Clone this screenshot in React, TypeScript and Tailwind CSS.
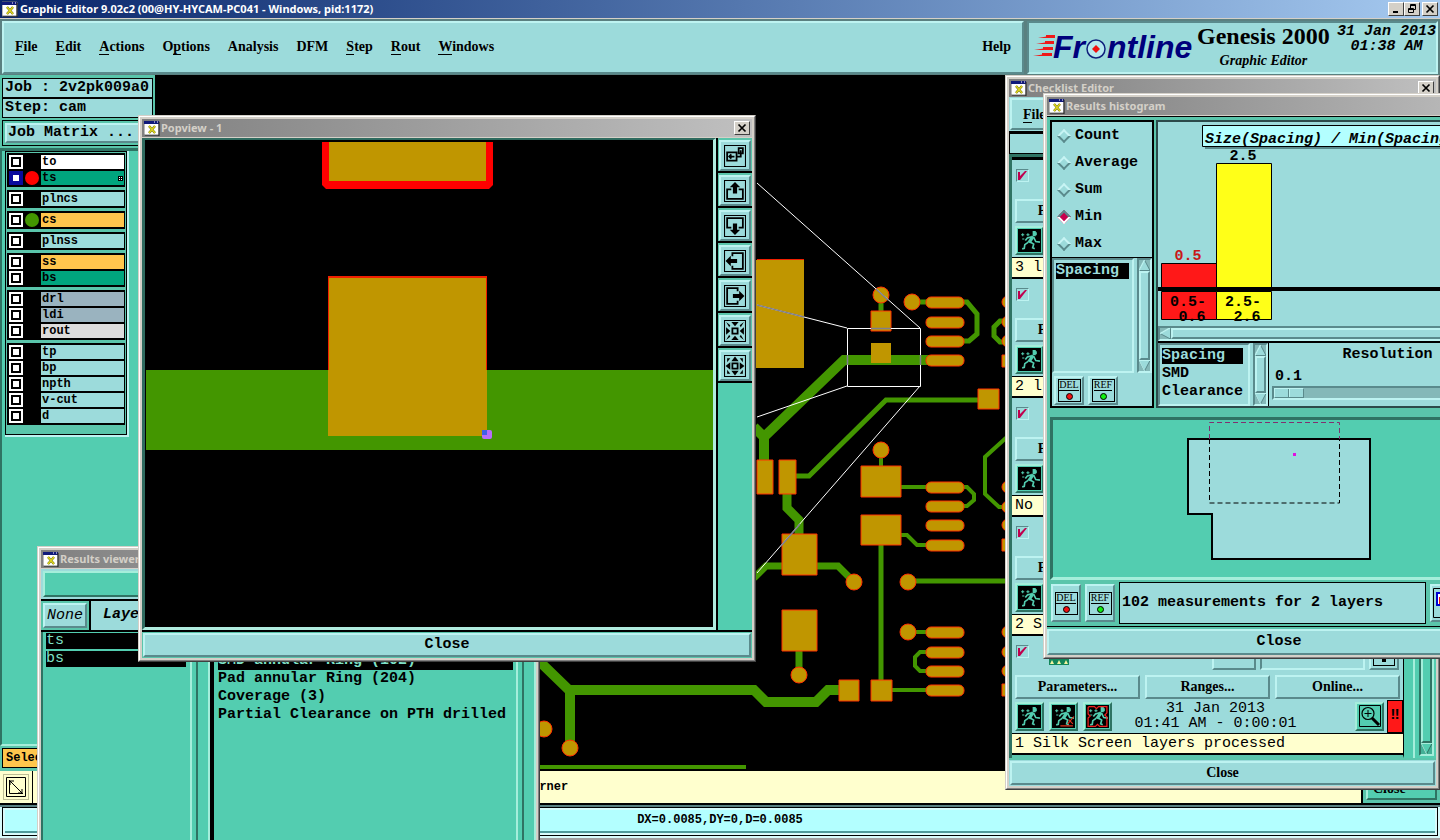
import { useState } from "react";
import type { ReactNode } from "react";
import clsx from "clsx";
import type { ClassValue } from "clsx";
import { twMerge } from "tailwind-merge";

const cn = (...classes: ClassValue[]) => twMerge(clsx(classes));

const RAISED = "border-2 border-t-[#bdf3f1] border-l-[#bdf3f1] border-r-[#5a8a8c] border-b-[#5a8a8c] bg-[#9cdbdb]";
const RAISED_TEAL = "border-2 border-t-[#a5eedb] border-l-[#a5eedb] border-r-[#2f7363] border-b-[#2f7363] bg-[#53cdb0]";
const SUNK = "border-2 border-t-[#5a8a8c] border-l-[#5a8a8c] border-r-[#bdf3f1] border-b-[#bdf3f1]";
const MONO = "font-['Liberation_Mono',monospace] text-[15px] leading-[18px]";
const SERIF = "font-['Liberation_Serif',serif] text-[14px] leading-[18px] font-bold";
const TITLE = "font-['Noto_Sans',sans-serif] text-[11px] leading-[16px] font-bold";

const LAYER_GROUPS = [
  [
    { name: "to", tone: "bg-white" },
    { name: "ts", tone: "bg-[#00a57e]", dot: "bg-[#ff0000]", active: true },
  ],
  [{ name: "plncs", tone: "bg-[#9cdbdb]" }],
  [{ name: "cs", tone: "bg-[#ffc64d]", dot: "bg-[#439600]" }],
  [{ name: "plnss", tone: "bg-[#9cdbdb]" }],
  [
    { name: "ss", tone: "bg-[#ffc64d]" },
    { name: "bs", tone: "bg-[#00a57e]" },
  ],
  [
    { name: "drl", tone: "bg-[#9ab3bf]" },
    { name: "ldi", tone: "bg-[#9ab3bf]" },
    { name: "rout", tone: "bg-[#dcdcdc]" },
  ],
  [
    { name: "tp", tone: "bg-[#9cdbdb]" },
    { name: "bp", tone: "bg-[#9cdbdb]" },
    { name: "npth", tone: "bg-[#9cdbdb]" },
    { name: "v-cut", tone: "bg-[#9cdbdb]" },
    { name: "d", tone: "bg-[#9cdbdb]" },
  ],
];

const MENUS = [
  ["", "F", "ile"],
  ["", "E", "dit"],
  ["", "A", "ctions"],
  ["O", "p", "tions"],
  ["Analysis", "", ""],
  ["DFM", "", ""],
  ["", "S", "tep"],
  ["", "R", "out"],
  ["", "W", "indows"],
];

function XIcon() {
  return (
    <svg width="16" height="16" viewBox="0 0 16 16" className="shrink-0" aria-hidden="true">
      <path d="M0 1h15v14H0z" fill="#fff" stroke="#777" />
      <path d="M0 1h15v3H0z" fill="#101a7a" />
      <path d="M10 1h1v2h-1zM13 1h1v2h-1z" fill="#8a8ac0" />
      <path d="M15 2v14H1" fill="none" stroke="#222" />
      <path d="M5 6l6 7M11 6l-6 7" stroke="#77760a" strokeWidth="2.400" />
      <path d="M5 6l6 7M11 6l-6 7" stroke="#e0d820" strokeWidth="1.200" />
    </svg>
  );
}

function CaptionButton({ label, children }: { label: string; children: ReactNode }) {
  return (
    <button
      aria-label={label}
      className="flex h-[14px] w-4 shrink-0 items-center justify-center border border-t-white border-l-white border-r-[#404040] border-b-[#404040] bg-[#d4d0c8]"
    >
      <svg width="10" height="10" viewBox="0 0 10 10" fill="none" stroke="#000">
        {children}
      </svg>
    </button>
  );
}

const CROSS = <path d="M1.500 1.500l7 7M8.500 1.500l-7 7" strokeWidth="1.700" />;

type FrameProps = { title: string; place: string; closable?: boolean; children: ReactNode };

function Frame({ title, place, closable, children }: FrameProps) {
  return (
    <section
      aria-label={title}
      className={cn(
        "absolute flex flex-col border border-t-[#d4d0c8] border-l-[#d4d0c8] border-r-[#404040] border-b-[#404040] bg-[#d4d0c8]",
        place,
      )}
    >
      <div className="flex flex-1 flex-col border border-t-white border-l-white border-r-[#808080] border-b-[#808080] p-[2px]">
        <header className="flex h-[18px] shrink-0 items-center gap-px bg-linear-to-r from-[#808080] to-[#c0c0c0] px-[2px]">
          <XIcon />
          <h2 className={cn(TITLE, "flex-1 text-[#d4d0c8]")}>{title}</h2>
          {closable && <CaptionButton label={`Close ${title}`}>{CROSS}</CaptionButton>}
        </header>
        {children}
      </div>
    </section>
  );
}

function Logo() {
  return (
    <svg width="164" height="36" viewBox="0 0 164 36" role="img" aria-label="Frontline">
      <g fill="#f01818">
        <path d="M5 5l17-3v3zM3 11l18-3v3zM1 17l19-3v3zM0 23l19-3v3z" />
        <path d="M13 2h9v3h-9zM12 8h9v3h-9zM10 14h10v3H10zM9 20h10v3H9z" />
      </g>
      <g fill="#00007c" fontFamily="Liberation Sans, sans-serif" fontWeight="700" fontStyle="italic" fontSize="32">
        <text x="20" y="25">Fr</text>
        <text x="74" y="25">ntline</text>
      </g>
      <circle cx="63" cy="16" r="9" fill="#b5e8ee" stroke="#10207c" strokeWidth="1.500" />
      <path d="M63 12l4 4-4 4-4-4z" fill="#f01010" />
    </svg>
  );
}

function Runner({ variant = "plain" }: { variant?: "plain" | "line" | "frame" }) {
  return (
    <button aria-label={`Run ${variant}`} className={cn("flex size-[29px] shrink-0 items-center justify-center", RAISED_TEAL)}>
      <svg width="23" height="23" viewBox="0 0 22 22" fill="none" stroke="#53cdb0" aria-hidden="true">
        <path d="M0 0h22v22H0z" fill="#000" stroke="none" />
        <path d="M14 2h3v1h1v3h-1v1h-3z" fill="#53cdb0" stroke="none" />
        <path d="M14.500 7l-4 6" strokeWidth="3.200" />
        <path d="M13 7.500L9 8.500 7 11M15 8l2 4 4 .500M11 12l4 2.500-1 3.500 2 1M10 12.500L6.500 15 6 18.500l-2 .500" strokeWidth="1.600" />
        <path d="M3 5.500h3M4.500 4v3M8 5.500h3M9.500 4v3M4 9.500h2" />
        {variant === "line" && <path d="M8 20h12M15 18l6-7M16 14l4 4" stroke="#e0301c" strokeWidth="1.100" />}
        {variant === "frame" && <path d="M3 1.500h5l2 2 2-2h8v6l-2 2 2 2v9h-7l-2-2-2 2H2v-8l2-2-2-2v-6z" stroke="#f02020" strokeWidth="1.200" />}
      </svg>
    </button>
  );
}

function Scrollbar({ horizontal, teal, onlyDown }: { horizontal?: boolean; teal?: boolean; onlyDown?: boolean }) {
  return (
    <div
      className={cn(
        "flex shrink-0",
        horizontal ? "h-[15px] w-full" : "w-[15px] flex-col",
        teal ? "bg-[#43b096]" : "bg-[#84b8b8]",
        SUNK,
        teal && "border-t-[#2f7363] border-l-[#2f7363] border-r-[#a5eedb] border-b-[#a5eedb]",
      )}
    >
      {!onlyDown && (
        <svg width="11" height="11" viewBox="0 0 11 11" className="shrink-0" aria-hidden="true">
          <path d={horizontal ? "M10.500 0v11L0 5.500z" : "M5.500 0L11 10.500H0z"} fill="#9cdbdb" stroke="#5a8a8c" />
          <path d={horizontal ? "M10 0L0 5.500" : "M5.500 0L0 10.500"} stroke="#bdf3f1" strokeWidth="1.500" />
        </svg>
      )}
      <div className={cn("flex-1", teal ? RAISED_TEAL : RAISED)} />
      {!horizontal && (
        <svg width="11" height="11" viewBox="0 0 11 11" className="shrink-0" aria-hidden="true">
          <path d="M0 .500h11L5.500 11z" fill={teal ? "#53cdb0" : "#9cdbdb"} stroke={teal ? "#2f7363" : "#5a8a8c"} />
          <path d="M0 .500h11M0 0l5.500 11" stroke={teal ? "#a5eedb" : "#bdf3f1"} fill="none" />
        </svg>
      )}
    </div>
  );
}

function BoardCanvas() {
  return (
    <svg className="h-full min-w-0 flex-1 bg-black" role="img" aria-label="Board canvas">
      <g transform="translate(-155 -75)">
        <g fill="none" stroke="#439600">
          <path strokeWidth="10" d="M930 360H844L764 437V462M754 427l10 10" />
          <path strokeWidth="5" d="M881 300v14M912 302h18M978 400H886L809 476H795M964 302h3l10 12v20l-8 7h-6M1006 321h-6l-6 6v9l6 6h6" />
          <path strokeWidth="9" d="M787 494v14l12 12v16" />
          <path strokeWidth="7" d="M784 566H766l-12 12M816 566h22l14 14M799 650v20" />
          <path strokeWidth="4" d="M881 455v14M900 487h28M900 535h7l10 10h10M964 487h3l7 7v6l-7 6h-4M1007 437l-22 20v37l14 13h6M926 652h-6l-5 5v9l5 5h6M890 690h38M908 632h20M540 767h206" />
          <path strokeWidth="5" d="M881 545v137M908 581h100" />
          <path strokeWidth="10" d="M538 660l31 30h185l12 12h50l12-12h12M570 690v52" />
        </g>
        <path d="M757 259h47v1h-47z" fill="#f02000" />
        <path d="M750 260h54v108h-54zM871 343h20v20h-20z" fill="#c09600" />
        <g fill="#c09600" stroke="#ff3000">
          <path d="M871 311h20v20h-20zM978 389h21v20h-21zM757 460h16v34h-16zM779 460h17v34h-17zM782 534h35v41h-35zM782 610h35v41h-35z" />
          <path d="M861 466h40v31h-40zM861 515h40v30h-40zM839 680h20v21h-20zM871 680h21v21h-21z" />
          <path d="M1002 355h10v12h-10zM1002 539h10v12h-10zM1002 684h10v12h-10z" />
          {[302, 322, 341, 360, 487, 506, 525, 545, 632, 652, 671, 690].map((y) => (
            <rect key={y} x="926" y={y - 5} width="38" height="11" rx="5" />
          ))}
          {[302, 322, 341, 487, 507, 525, 632, 652, 671].map((y) => (
            <circle key={y} cx="1008" cy={y} r="6" />
          ))}
          {[[881, 295], [912, 302], [881, 450], [854, 582], [908, 582], [908, 632], [799, 675], [544, 729], [570, 748]].map(([x, y]) => (
            <circle key={`${x}-${y}`} cx={x} cy={y} r="8" />
          ))}
        </g>
        <path d="M847.500 328.500h73v58h-73zM757 183l163 145M757 305l90 23M757 417l90-31M757 573l163-187" fill="none" stroke="#fff" />
        <path d="M757 305l47 12M876 289l12 11M871 328.500h20M781 546l19-22M847.500 355v10M920.500 355v10" stroke="#7f7f8f" strokeWidth="1.500" fill="none" />
      </g>
    </svg>
  );
}

function Sidebar() {
  return (
    <aside className="flex w-[155px] shrink-0 flex-col bg-[#53cdb0]">
      <div className={cn(MONO, "flex flex-col bg-[#5ac5ab] px-[2px] pt-[3px] pb-[2px] font-bold whitespace-nowrap")}>
        <p className="border border-black bg-[#9cdbdb] px-[2px]">Job : 2v2pk009a0</p>
        <p className="border border-black bg-[#9cdbdb] px-[2px]">Step: cam</p>
        <div className="mt-[2px] border border-black bg-[#5ac5ab] p-[2px]">
          <button className={cn("block w-full px-px text-left leading-[16px]", RAISED)}>Job Matrix ...</button>
        </div>
      </div>
      <div className="flex-1 border-t-[3px] border-l-2 border-[#2f7363] border-b-2 border-b-[#a5eedb] pl-[3px]">
        <div className="w-[124px] border-r-2 border-b-2 border-[#bdf3f1]">
          <ul className="flex flex-col gap-[3px] border border-black bg-[#5ac5ab] px-px pt-px pb-[9px]">
            {LAYER_GROUPS.map((group) => (
              <li key={group[0].name} className="bg-black p-px">
                {group.map((layer) => (
                  <label key={layer.name} className="flex h-4 items-center gap-px font-['Liberation_Mono',monospace] text-[12px] leading-[14px] font-bold">
                    <span className={cn("ml-px flex size-[14px] items-center justify-center", layer.active ? "bg-[#0a0a9c]" : "bg-white")}>
                      <input
                        type="checkbox"
                        className={cn("size-[10px] appearance-none border-2 border-black bg-white", layer.active && "border-[#0a0a9c]")}
                      />
                    </span>
                    <span className={cn("ml-px size-[14px] rounded-full", layer.dot)} />
                    <span className={cn("ml-px flex h-[14px] flex-1 items-center justify-between px-px", layer.tone)}>
                      {layer.name}
                      {layer.active && (
                        <svg width="5" height="5" viewBox="0 0 5 5" shapeRendering="crispEdges" aria-hidden="true">
                          <path d="M0 0h5v5H0z" />
                          <path d="M1 1h1v1H1zM3 1h1v1H3zM1 3h1v1H1zM3 3h1v1H3z" fill="#fff" />
                        </svg>
                      )}
                    </span>
                  </label>
                ))}
              </li>
            ))}
          </ul>
        </div>
      </div>
      <div className="bg-[#5ac5ab] px-[2px] pt-[2px] pb-[3px]">
        <p className="border border-black bg-[#ffc64d] px-[3px] font-['Liberation_Mono',monospace] text-[12px] leading-[18px] font-bold">Select</p>
      </div>
    </aside>
  );
}

const VIEW_TOOLS = [
  { name: "Detach view", lines: "M3 7h9v8H3zM10 11H5M7 9l-2 2 2 2M14 3h4v5h-4zM16 5v6h-4" },
  { name: "Pan up", lines: "M7 9H3v9h15V9h-4", solid: "M10.500 2l5 5h-3v6h-4V7h-3z" },
  { name: "Pan down", lines: "M7 12H3V3h15v9h-4", solid: "M10.500 19l5-5h-3V8h-4v6h-3z" },
  { name: "Pan left", lines: "M8 6V3h10v15H8v-3", solid: "M1.500 10.500l5-5v3h6v4h-6v3z" },
  { name: "Pan right", lines: "M13 6V3H3v15h10v-3", solid: "M19.500 10.500l-5-5v3h-6v4h6v3z" },
  {
    name: "Zoom in",
    lines: "M8 8h5v5H8z",
    solid: "M7 2h7l-3.500 4zM7 19h7l-3.500-4zM2 7v7l4-3.500zM19 7v7l-4-3.500zM2 2l4 3-1 2zM19 2l-4 3 1 2zM2 19l4-3-1-2zM19 19l-4-3 1-2z",
  },
  {
    name: "Zoom out",
    lines: "M8 8h5v5H8z",
    solid: "M7 6h7l-3.500-4.500zM7 15h7l-3.500 4.500zM6 7v7l-4.500-3.500zM15 7v7l4.500-3.500zM3 7V3h3zM18 7V3h-3zM3 14v4h3zM18 14v4h-3z",
  },
];

function Popview() {
  return (
    <Frame title="Popview - 1" place="left-[138px] top-[115px] w-[618px]" closable>
      <div className="flex h-[493px] border-t border-[#d4d0c8] bg-[#5ac5ab]">
        <svg
          className="h-full min-w-0 flex-1 border-t-2 border-b-[3px] border-l-[3px] border-r-[3px] border-[#2f6b5f] border-r-[#b0ecdf] border-b-[#b0ecdf] bg-black"
          role="img"
          aria-label="Magnified pad"
        >
          <g transform="translate(-145 -140)">
            <path d="M146 370h567v80H146z" fill="#439600" />
            <path d="M322 142h171v43l-4 4H326l-4-4z" fill="#f00" />
            <path d="M329 142h157v39H329z" fill="#c09600" />
            <path d="M328 276h159v94H328z" fill="#f02000" />
            <path d="M329 278h157v92H329zM328 370h159v66H328z" fill="#c09600" />
            <rect x="482" y="430" width="10" height="9" rx="2" fill="#b86cf8" />
            <path d="M482 430h5v5h-5z" fill="#4060e8" />
          </g>
        </svg>
        <div className="w-[36px] border-l-2 border-black bg-[#53cdb0]">
          {VIEW_TOOLS.map((tool) => (
            <div key={tool.name} className="h-[35px] border-b-2 border-black bg-[#5ac5ab] px-px pt-[2px]">
              <button aria-label={tool.name} className={cn("flex h-[31px] w-full items-center justify-center", RAISED)}>
                <svg width="22" height="22" viewBox="0 0 21 21" stroke="#000" aria-hidden="true">
                  <path d="M.5.500h20v20H.500z" fill="none" />
                  <path d={tool.lines} fill="none" strokeWidth="1.700" />
                  {tool.solid && <path d={tool.solid} stroke="none" />}
                </svg>
              </button>
            </div>
          ))}
        </div>
      </div>
      <div className="border-t-2 border-black bg-[#5ac5ab] p-px">
        <button className={cn(MONO, "block w-full leading-[20px] font-bold", RAISED)}>Close</button>
      </div>
    </Frame>
  );
}

function ResultsViewer() {
  return (
    <Frame title="Results viewer" place="left-[37px] top-[546px] w-[503px] h-[400px]">
      <div className="mt-px bg-[#9cdbdb] p-[2px]">
        <button aria-label="Results menu" className={cn("block h-[26px] w-full", RAISED_TEAL)} />
      </div>
      <div className={cn(MONO, "flex border-y-2 border-black bg-[#9cdbdb] italic")}>
        <div className="border-r-2 border-black bg-[#5ac5ab] p-[2px]">
          <button className={cn("block h-[25px] w-[44px] px-px leading-[18px]", RAISED)}>None</button>
        </div>
        <p className="px-[12px] leading-7 font-bold">Layer</p>
      </div>
      <div className={cn(MONO, "flex flex-1 bg-[#53cdb0]")}>
        <ul className="w-[151px] border-l-2 border-r-[2px] border-l-[#2f7363] border-r-[#a5eedb] pt-px pr-[4px] pl-[3px] text-[#7fe0c8]">
          <li className="mb-[2px] bg-black leading-[16px]">ts</li>
          <li className="mb-[2px] bg-black leading-[16px]">bs</li>
        </ul>
        <div className="ml-[4px] w-[14px] border-x-2 border-l-[#2f7363] border-r-[#a5eedb]" />
        <ul className="flex-1 border-l-4 border-r-2 border-l-black border-r-[#a5eedb] pt-[20px] pr-[3px] pl-[4px] font-bold">
          <li className="bg-black text-[#7fe0c8]">SMD annular Ring (102)</li>
          <li>Pad annular Ring (204)</li>
          <li>Coverage (3)</li>
          <li>Partial Clearance on PTH drilled</li>
        </ul>
        <div className="ml-[4px] w-[14px] border-x-2 border-l-[#2f7363] border-r-[#a5eedb]" />
      </div>
    </Frame>
  );
}

const CHECKS = ["3 l", "2 l", "No", "2 S", "1 Silk Screen layers processed"];

function CheckItem({ message, last }: { message: string; last: boolean }) {
  return (
    <li className="flex flex-col bg-[#9cdbdb]">
      <div className="flex h-[39px] items-start justify-between gap-2 px-1 pt-[9px]">
        <label className="grid">
          <input type="checkbox" defaultChecked aria-label={`Enable ${message}`} className={cn("col-start-1 row-start-1 size-[13px] appearance-none", SUNK, "border")} />
          <svg width="13" height="13" viewBox="0 0 13 13" className="pointer-events-none col-start-1 row-start-1" aria-hidden="true">
            <path d="M2 3h2v4l5-5h2L4 11H2z" fill="#c0004e" />
          </svg>
        </label>
        {last && (
          <div className="flex h-[25px] flex-1 items-end gap-1">
            <svg width="20" height="20" viewBox="0 0 20 20" className="ml-3 self-start" aria-hidden="true">
              <path d="M0 0h20v20H0z" fill="#12865a" />
              <path d="M1 19l2-4 2 4zM8 19l2-4 2 4zM15 19l2-4 2 4z" fill="#f4f4a0" />
            </svg>
            <div className={cn("ml-auto h-6 w-[44px]", RAISED)} />
            <div className={cn("h-6 w-[105px]", SUNK)} />
            <button aria-label="Info" className={cn("flex h-[30px] w-[30px] items-center justify-center", RAISED)}>
              <span className="flex size-[22px] items-end justify-center border border-black pb-[3px]">
                <span className="size-1 bg-black" />
              </span>
            </button>
          </div>
        )}
      </div>
      <div className={cn(SERIF, "flex gap-[5px] px-[3px]")}>
        {["Parameters...", "Ranges...", "Online..."].map((label) => (
          <button key={label} className={cn("h-6 flex-1", RAISED)}>
            {label}
          </button>
        ))}
      </div>
      <div className="flex h-[34px] items-center pl-[3px]">
        <div className="flex gap-[5px]">
          <Runner />
          <Runner variant="line" />
          <Runner variant="frame" />
        </div>
        {last && (
          <p className={cn(MONO, "flex-1 pr-9 text-center leading-[15px]")}>
            31 Jan 2013
            <br />
            01:41 AM - 0:00:01
          </p>
        )}
        <button aria-label="Inspect" className={cn("ml-auto flex size-[29px] items-center justify-center", RAISED_TEAL)}>
          <svg width="22" height="22" viewBox="0 0 22 22" fill="none" stroke="#000" aria-hidden="true">
            <path d="M.5.500h21v21H.500zM9 5v7M5.500 8.500h7" />
            <circle cx="9" cy="8.500" r="6" strokeWidth="1.200" />
            <path d="M13 13l7 7" strokeWidth="3" />
          </svg>
        </button>
        <button aria-label="Errors" className="ml-[3px] flex h-[33px] w-4 items-center justify-center border border-black bg-[#ff1818]">
          <span className={cn(MONO, "font-bold")}>‼</span>
        </button>
      </div>
      <p className={cn(MONO, "border-t border-b-2 border-black bg-[#ffffce] px-[3px] pt-px")}>{message}</p>
    </li>
  );
}

function ChecklistEditor() {
  return (
    <Frame title="Checklist Editor" place="left-[1005px] top-[75px] w-[435px]" closable>
      <nav className={cn(SERIF, "flex h-[36px] items-center border-b-2 border-black bg-[#9cdbdb] p-px")}>
        <div className={cn("h-full w-full px-[11px] py-[6px] leading-[18px]", RAISED)}>
          <a href="#file" className="border-b border-black">F</a>ile
        </div>
      </nav>
      <div className="h-[21px] border border-black bg-[#9cdbdb]" />
      <div className="flex border-t-[3px] border-l-[3px] border-t-[#2f7363] border-l-[#2f7363] bg-[#53cdb0]">
        <ul className="flex-1 border-r border-b-[3px] border-black border-b-[#5ac5ab] bg-black pt-[3px]">
          {CHECKS.map((message, i) => (
            <CheckItem key={message} message={message} last={i === CHECKS.length - 1} />
          ))}
        </ul>
        <div className="ml-[9px] w-[2px] bg-[#a5eedb]" />
        <div className="ml-[4px] flex pr-[2px] pb-[2px]">
          <Scrollbar teal onlyDown />
        </div>
      </div>
      <div className="border-t-2 border-[#5ac5ab] bg-[#9cdbdb] p-px">
        <button className={cn(SERIF, "block h-6 w-full", RAISED)}>Close</button>
      </div>
    </Frame>
  );
}

function TagButton({ label, color, tall }: { label: string; color: string; tall?: boolean }) {
  return (
    <button className={cn("flex w-[30px] items-center justify-center", tall ? "h-[38px]" : "h-[29px]", RAISED)}>
      <span className="flex size-[23px] flex-col items-center border border-black">
        <span className="border-b border-black font-['Liberation_Serif',serif] text-[10px] leading-[10px] font-normal">{label}</span>
        <span className={cn("mt-[2px] size-[7px] rounded-full border border-black", color)} />
      </span>
    </button>
  );
}

function HistogramChart() {
  return (
    <svg className="block h-[204px] w-full" role="img" aria-label="Spacing histogram">
      <g transform="translate(-1158 -122)" fontFamily="Liberation Mono, monospace" fontSize="15" fontWeight="700" textAnchor="middle">
        <path d="M1205 129h300v20h-300z" fill="#5a8a8c" />
        <path d="M1202.500 125.500h300v21h-300z" fill="#b3ffff" stroke="#000" />
        <text x="1205" y="143" fontStyle="italic" textAnchor="start">Size(Spacing) / Min(Spacing)</text>
        <path d="M1161.500 263.500h55v24h-55zM1161.500 291.500h55v28h-55z" fill="#ff1818" stroke="#000" />
        <path d="M1216.500 163.500h55v124h-55zM1216.500 291.500h55v28h-55z" fill="#ffff18" stroke="#000" />
        <path d="M1156 287h400v4h-400z" />
        <text x="1188" y="260" fill="#c81818">0.5</text>
        <text x="1243" y="160">2.5</text>
        <text x="1188" y="306">0.5-</text>
        <text x="1192" y="321">0.6</text>
        <text x="1243" y="306">2.5-</text>
        <text x="1247" y="321">2.6</text>
      </g>
    </svg>
  );
}

function ResultsHistogram() {
  const [metric, setMetric] = useState("Min");

  return (
    <Frame title="Results histogram" place="left-[1043px] top-[93px] w-[472px]">
      <div className={cn(MONO, "mt-px border-t border-black bg-[#5ac5ab] px-[3px] font-bold")}>
        <div className="flex h-[291px] gap-[2px] pt-[3px]">
          <div className="flex w-[104px] shrink-0 flex-col border-2 border-black bg-[#9cdbdb]">
            <fieldset className="border-b border-black">
              {["Count", "Average", "Sum", "Min", "Max"].map((name) => (
                <label key={name} className="flex h-[27px] items-center gap-[5px] pl-[6px]">
                  <input
                    type="radio"
                    name="metric"
                    checked={metric === name}
                    onChange={() => setMetric(name)}
                    className={cn(
                      "mx-px size-[10px] rotate-45 appearance-none border-2",
                      metric === name
                        ? "border-t-[#5a8a8c] border-l-[#5a8a8c] border-r-white border-b-white bg-[#c8004e]"
                        : "border-t-[#c8f4f4] border-l-[#c8f4f4] border-r-[#5a8a8c] border-b-[#5a8a8c]",
                    )}
                  />
                  {name}
                </label>
              ))}
            </fieldset>
            <div className="flex flex-1 gap-[3px]">
              <ul className={cn("flex-1 p-[3px] pl-[2px]", SUNK)}>
                <li className="bg-black leading-[16px] text-[#9cdbdb]">Spacing</li>
              </ul>
              <Scrollbar />
            </div>
            <div className="flex gap-[4px] pt-[3px] pb-px pl-[2px]">
              <TagButton label="DEL" color="bg-[#f01010]" />
              <TagButton label="REF" color="bg-[#10f010]" />
            </div>
          </div>
          <div className="flex min-w-0 flex-1 flex-col border-2 border-[#2c4a4a] bg-[#9cdbdb]">
            <HistogramChart />
            <Scrollbar horizontal />
            <div className="flex flex-1 border-t-2 border-black">
              <ul className={cn("w-[92px] pt-[3px] pl-[2px]", SUNK)}>
                <li className="mb-px w-[81px] bg-black leading-[16px] text-[#9cdbdb]">Spacing</li>
                <li>SMD</li>
                <li>Clearance</li>
              </ul>
              <div className="ml-[3px] flex">
                <Scrollbar />
              </div>
              <div className="flex flex-1 flex-col border-l border-black px-[3px] pt-[3px]">
                <label htmlFor="resolution" className="text-center">Resolution</label>
                <output htmlFor="resolution" className="mt-[4px] px-[3px]">0.1</output>
                <input
                  id="resolution"
                  type="range"
                  defaultValue="0"
                  className={cn(
                    "h-[14px] w-full appearance-none bg-[#84b8b8] [&::-webkit-slider-thumb]:h-[10px] [&::-webkit-slider-thumb]:w-[30px] [&::-webkit-slider-thumb]:appearance-none [&::-webkit-slider-thumb]:border [&::-webkit-slider-thumb]:border-t-[#bdf3f1] [&::-webkit-slider-thumb]:border-l-[#bdf3f1] [&::-webkit-slider-thumb]:border-r-[#5a8a8c] [&::-webkit-slider-thumb]:border-b-[#5a8a8c] [&::-webkit-slider-thumb]:bg-[linear-gradient(to_right,#9cdbdb_13px,#5a8a8c_13px,#5a8a8c_14px,#bdf3f1_14px,#bdf3f1_15px,#9cdbdb_15px)]",
                    SUNK,
                  )}
                />
              </div>
            </div>
          </div>
        </div>
        <svg className="mt-[9px] block h-[163px] w-full border-[3px] border-[#2f7363] border-b-[#a5eedb] bg-[#53cdb0]" role="img" aria-label="Board outline">
          <g transform="translate(-1053 -420)" fill="none" stroke="#000">
            <path d="M1188 439h182v120h-158v-45h-24z" fill="#9cdbdb" strokeWidth="2" />
            <path d="M1209.500 439v64h130v-64" strokeDasharray="5 3" />
            <path d="M1209.500 439v-16.500h130V439" stroke="#803070" strokeDasharray="5 3" />
            <path d="M1293 453h3v3h-3z" fill="#e010e0" stroke="none" />
          </g>
        </svg>
        <div className="flex items-center gap-[4px] py-[2px] pl-px">
          <TagButton label="DEL" color="bg-[#f01010]" tall />
          <TagButton label="REF" color="bg-[#10f010]" tall />
          <p className="w-[307px] border border-black bg-[#9cdbdb] px-[2px] py-[11px]">102 measurements for 2 layers</p>
          <button aria-label="Show location" className={cn("flex h-[38px] w-[34px] items-center justify-center", RAISED)}>
            <svg width="28" height="30" viewBox="0 0 28 30" fill="none" aria-hidden="true">
              <path d="M.5.500h27v29H.500z" stroke="#000" />
              <path d="M4 5h16v12H4z" stroke="#0000d0" strokeWidth="2" fill="#fff" />
              <path d="M6 9h8v7H6z" fill="#f01010" />
            </svg>
          </button>
        </div>
      </div>
      <div className="border-t border-black bg-[#5ac5ab] pt-[2px]">
        <button className={cn(MONO, "block w-full leading-[22px] font-bold", RAISED)}>Close</button>
      </div>
    </Frame>
  );
}

export default function App() {
  return (
    <main className="relative flex h-screen flex-col overflow-hidden bg-black text-black">
      <header className="flex h-[18px] shrink-0 items-center gap-[2px] bg-linear-to-r from-[#0a246a] to-[#a6caf0] px-[2px]">
        <XIcon />
        <h1 className={cn(TITLE, "flex-1 text-white")}>Graphic Editor 9.02c2 (00@HY-HYCAM-PC041 - Windows, pid:1172)</h1>
        <div className="flex">
          <CaptionButton label="Minimize"><path d="M2 8h5" strokeWidth="2" /></CaptionButton>
          <CaptionButton label="Restore"><path d="M3.500 4V.500h5v5H6M3.500 1.500h5M1.500 4.500h5v4h-5zM1.500 5.500h5" /></CaptionButton>
        </div>
        <CaptionButton label="Close">{CROSS}</CaptionButton>
      </header>

      <div className="flex h-[57px] shrink-0 gap-[3px] border-t border-[#d4d0c8] bg-[#5a8080] px-[2px] pt-[2px] pb-px">
        <nav className={cn(SERIF, "flex flex-1 items-center gap-[18px] px-[11px] pb-px", RAISED)}>
          {MENUS.map(([before, key, after]) => (
            <a key={before + key + after} href="#menu">
              {before}
              {key && <span className="border-b border-black">{key}</span>}
              {after}
            </a>
          ))}
          <a href="#help" className="ml-auto">Help</a>
        </nav>
        <div className="flex w-[411px] shrink-0 border-2 border-t-[#5a8a8c] border-l-[#5a8a8c] border-r-[#bdf3f1] border-b-[#bdf3f1] bg-[#9cdbdb] pl-1">
          <div className="pt-[10px]"><Logo /></div>
          <div className="flex flex-col items-center">
            <p className="font-['Liberation_Serif',serif] text-[24px] leading-[26px] font-bold">Genesis 2000</p>
            <p className="mt-[3px] font-['Liberation_Serif',serif] text-[14px] leading-[18px] font-bold italic">Graphic Editor</p>
          </div>
          <p className={cn(MONO, "ml-auto shrink-0 pt-px text-center leading-[15px] font-bold italic")}>
            31 Jan 2013
            <br />
            01:38 AM
          </p>
        </div>
      </div>

      <div className="flex min-h-0 flex-1">
        <Sidebar />
        <BoardCanvas />
      </div>

      <div className="flex h-[34px] shrink-0 border-b-2 border-black bg-[#ffffce] font-['Liberation_Mono',monospace] text-[12px] leading-[32px] font-bold">
        <div className="flex w-[33px] items-center justify-center border-r border-black">
          <button aria-label="Snap mode" className="flex size-[26px] items-center justify-center border border-[#bdbd94]">
            <svg width="20" height="20" viewBox="0 0 20 20" fill="none" stroke="#000" aria-hidden="true">
              <path d="M.5.500h19v19H.500zM3.500 3v13.500H17M4 4l12 12M4 8V4h4M16 12v4h-4" />
            </svg>
          </button>
        </div>
        <p className="flex-1 pl-[492px]">corner</p>
        <div className="w-[79px] border-l-2 border-black bg-[#5ac5ab] p-[3px]">
          <button className={cn(SERIF, "block h-[26px] w-full pt-1 pl-[5px] text-left", RAISED_TEAL)}>Close</button>
        </div>
      </div>
      <footer className="h-[35px] shrink-0 border-t-2 border-b-2 border-t-[#5a8080] border-b-[#a0a0a0] bg-[#d8fbfb] px-[2px] pb-[2px]">
        <div className="h-full border border-black p-[2px]">
          <p className="h-full border-b-2 border-[#4f9a9a] bg-[#b3ffff] text-center font-['Liberation_Mono',monospace] text-[12px] leading-[20px] font-bold">
            DX=0.0085,DY=0,D=0.0085
          </p>
        </div>
      </footer>

      <ChecklistEditor />
      <ResultsHistogram />
      <ResultsViewer />
      <Popview />
    </main>
  );
}
